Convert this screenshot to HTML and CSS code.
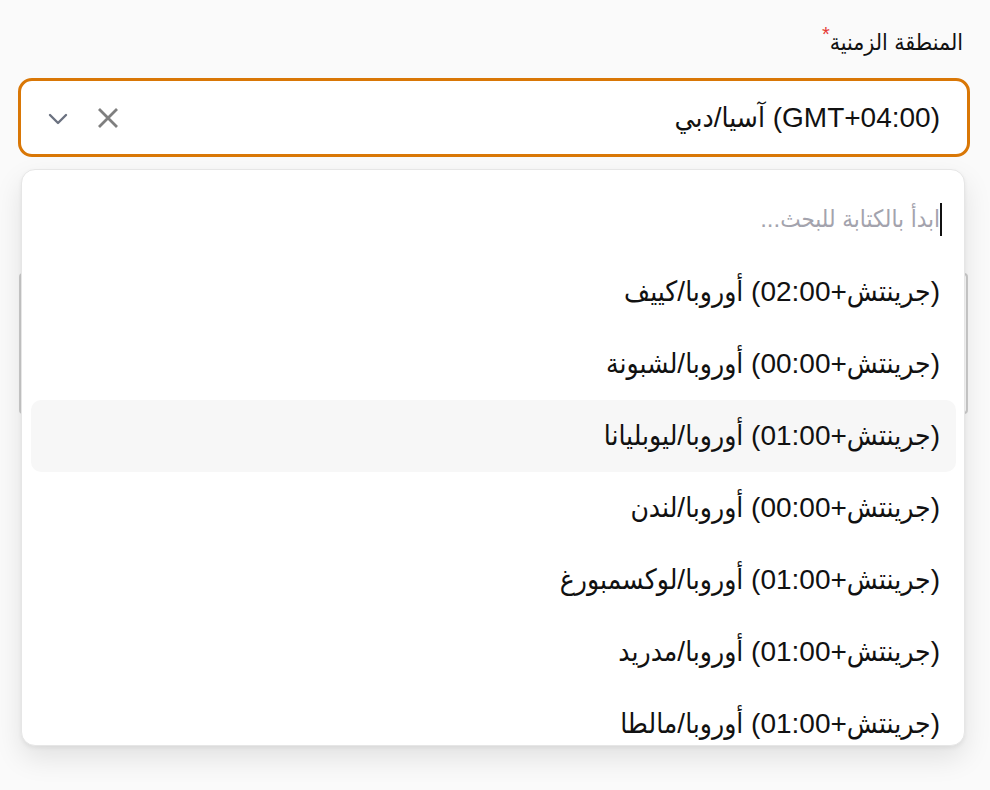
FILE: index.html
```html
<!DOCTYPE html>
<html lang="ar" dir="rtl">
<head>
<meta charset="utf-8">
<title>المنطقة الزمنية</title>
<link rel="stylesheet" href="styles.css">
</head>
<body>
<div class="page">
  <div class="field">
    <label class="label">المنطقة الزمنية<span class="req">*</span></label>
    <div class="select">
      <span class="value">(GMT+04:00) آسيا/دبي</span>
      <span class="icons">
        <svg class="clear" width="22" height="22" viewBox="0 0 22 22"><path d="M2 2 L20 20 M20 2 L2 20" stroke="#7f7f7f" stroke-width="2.8" fill="none"/></svg>
        <svg class="chev" width="20" height="12" viewBox="0 0 20 12"><path d="M2 2 L10 10 L18 2" stroke="#6b7280" stroke-width="2.4" fill="none" stroke-linecap="round" stroke-linejoin="round"/></svg>
      </span>
    </div>
  </div>
  <div class="behind"></div>
  <div class="dropdown">
    <div class="search"><span class="caret"></span><span class="placeholder">ابدأ بالكتابة للبحث...</span></div>
    <ul class="options">
      <li class="option">(جرينتش+02:00) أوروبا/كييف</li>
      <li class="option">(جرينتش+00:00) أوروبا/لشبونة</li>
      <li class="option active">(جرينتش+01:00) أوروبا/ليوبليانا</li>
      <li class="option">(جرينتش+00:00) أوروبا/لندن</li>
      <li class="option">(جرينتش+01:00) أوروبا/لوكسمبورغ</li>
      <li class="option">(جرينتش+01:00) أوروبا/مدريد</li>
      <li class="option">(جرينتش+01:00) أوروبا/مالطا</li>
    </ul>
  </div>
</div>
</body>
</html>
```
FILE: styles.css
```css
html, body {
  margin: 0;
  padding: 0;
  background: #fafafa;
  font-family: "Liberation Sans", "DejaVu Sans Condensed", "DejaVu Sans", sans-serif;
  color: #111;
}
.page {
  position: relative;
  width: 990px;
  height: 790px;
}
.field {
  padding: 28px 20px 0 20px;
}
.label {
  display: block;
  font-size: 23px;
  line-height: 28px;
  padding-right: 7px;
  margin-bottom: 22px;
  color: #111;
}
.req {
  color: #e53935;
  font-size: 20px;
  vertical-align: 9px;
  line-height: 0;
}
.select {
  margin-left: -2px;
  height: 73px;
  border: 3px solid #d97706;
  border-radius: 14px;
  background: #fff;
  display: flex;
  align-items: center;
  justify-content: space-between;
  padding: 0 27px 0 27px;
}
.value {
  font-size: 28px;
}
.icons {
  display: flex;
  align-items: center;
  gap: 29px;
}
.clear {
  display: block;
}
.chev {
  display: block;
  margin-top: 2px;
}
.behind {
  position: absolute;
  left: 19px;
  top: 273px;
  width: 945px;
  height: 137px;
  border: 2px solid #cdcdcd;
  border-radius: 4px;
  background: #fff;
}
.dropdown {
  position: absolute;
  left: 21px;
  top: 169px;
  width: 942px;
  height: 575px;
  background: #fff;
  border: 1px solid #e6e6e6;
  border-radius: 14px;
  box-shadow: 0 12px 28px rgba(0, 0, 0, 0.10), 0 2px 4px rgba(0, 0, 0, 0.06);
  overflow: hidden;
}
.search {
  height: 34px;
  padding: 32px 22px 20px 22px;
  display: flex;
  align-items: center;
  font-size: 24px;
}
.caret {
  width: 2px;
  height: 33px;
  background: #111;
}
.placeholder {
  color: #a3a3ad;
}
.options {
  list-style: none;
  margin: 0;
  padding: 0 8px 0 9px;
}
.option {
  height: 72px;
  line-height: 72px;
  padding: 0 16px;
  font-size: 28px;
  border-radius: 10px;
  white-space: nowrap;
}
.option.active {
  background: #f7f7f7;
}
```
